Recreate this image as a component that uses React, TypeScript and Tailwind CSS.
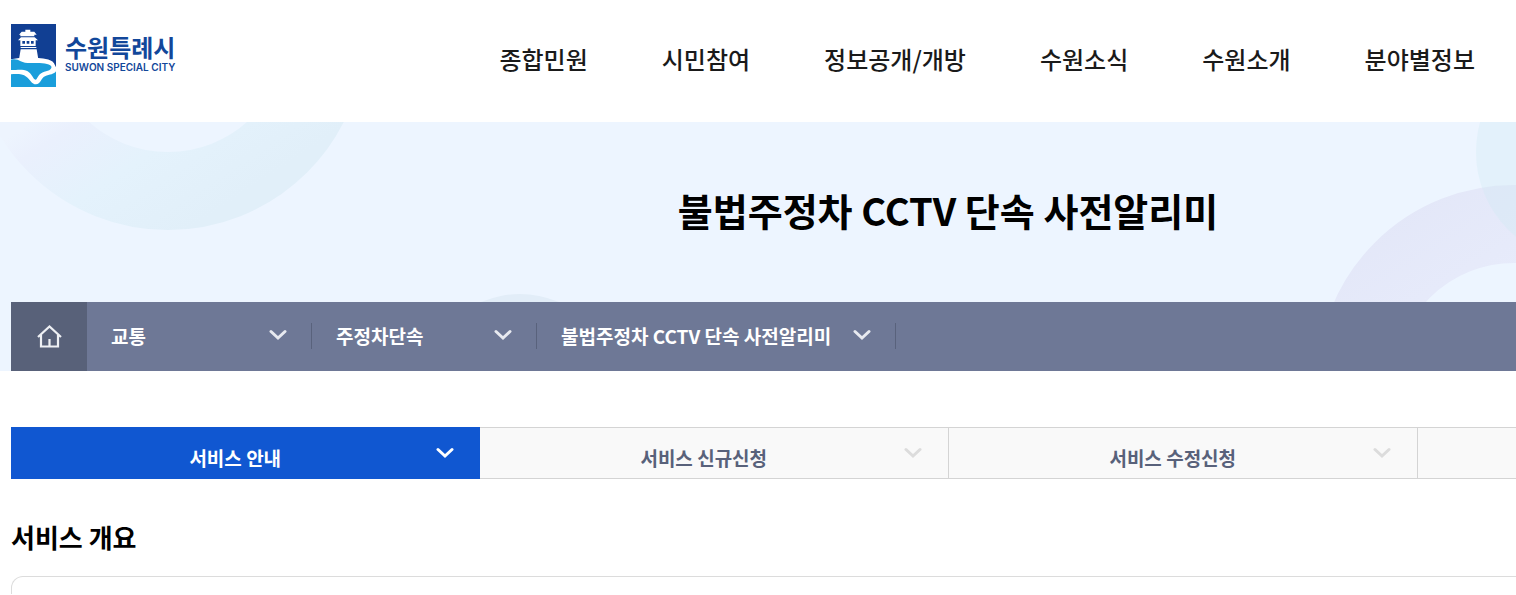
import type { ReactNode } from "react"

const menuItems = ["종합민원", "시민참여", "정보공개/개방", "수원소식", "수원소개", "분야별정보"]
const breadcrumbs = ["교통", "주정차단속", "불법주정차 CCTV 단속 사전알리미"]
const tabs = ["서비스 안내", "서비스 신규신청", "서비스 수정신청"]

function Chevron({ className }: { className: string }) {
  return (
    <svg width="18" height="12" viewBox="0 0 18 12" fill="none" aria-hidden="true" className={className}>
      <path d="M2 2.5 L9 9 L16 2.5" stroke="currentColor" strokeWidth="3" strokeLinecap="round" />
    </svg>
  )
}

function Logo() {
  return (
    <a href="#home" className="flex shrink-0 items-center gap-[9px] text-[#12479a]">
      <svg width="45" height="63" viewBox="0 0 135 189" aria-hidden="true">
        <rect width="135" height="189" fill="#113f93" />
        <path d="M0 106 L24 102 H82 C100 104 127 105 132 124 L135 130 V189 H0 Z" fill="#fff" />
        {/* fortress tower */}
        <path
          d="M43 17 H58 V23 H70 L77 32 H70 V37 H28 V32 H24 L32 23 H43 Z M30 40 H71 L81 49 H74 V66 H28 V49 H21 Z M29 69 H76 V72 H29 Z M29 76 H77 L83 112 H23 Z"
          fill="#fff"
        />
        <path d="M34 51 H42 V59 H34 Z M47 51 H55 V59 H47 Z M60 51 H68 V59 H60 Z" fill="#113f93" />
        {/* river */}
        <path
          d="M0 107 C12 104 21 107 29 112 C43 120 66 116 86 117 C108 118 125 123 121 132 C116 144 96 140 85 152 C78 161 77 167 73 167 C67 167 64 151 50 142 C36 134 13 139 0 138 Z"
          fill="#1a9edb"
        />
        <path
          d="M0 151 C16 150 34 149 46 158 C57 166 62 181 75 181 C89 181 90 162 102 157 C116 151 130 151 135 142 V189 H0 Z"
          fill="#1a9edb"
        />
      </svg>
      <span className="flex flex-col pb-1.5">
        <span className="text-2xl leading-7 font-bold">수원특례시</span>
        <span className="font-[Inter,sans-serif] text-[10px] leading-3 font-semibold">SUWON SPECIAL CITY</span>
      </span>
    </a>
  )
}

function HeroShapes() {
  return (
    <svg width="1896" height="249" viewBox="0 122 1896 249" fill="none" aria-hidden="true" className="absolute top-0 left-0">
      <defs>
        <linearGradient id="ringLeft" gradientUnits="userSpaceOnUse" x1="50" y1="110" x2="146" y2="257">
          <stop offset="0" stopColor="#edf4fe" />
          <stop offset="0.15" stopColor="#eaf0fd" />
          <stop offset="0.52" stopColor="#e4f2fc" />
          <stop offset="1" stopColor="#e1eff9" />
        </linearGradient>
        <linearGradient id="ringRight" gradientUnits="userSpaceOnUse" x1="1400" y1="200" x2="1500" y2="360">
          <stop offset="0" stopColor="#e3e7f8" />
          <stop offset="1" stopColor="#e9edfc" />
        </linearGradient>
      </defs>
      <circle cx="168" cy="33" r="158" stroke="url(#ringLeft)" strokeWidth="78" />
      <circle cx="520" cy="392" r="98" fill="#e2edf8" />
      <circle cx="1514" cy="382" r="158" stroke="url(#ringRight)" strokeWidth="78" />
      <circle cx="1586" cy="152" r="110" fill="#cdebf3" fillOpacity="0.33" />
    </svg>
  )
}

function BreadcrumbItem({ children }: { children: ReactNode }) {
  return (
    <li className="flex items-center pb-0.5">
      <button
        type="button"
        className="flex min-w-56 items-center justify-between gap-[22px] px-6 text-left text-[19px] leading-7 font-bold text-white"
      >
        {children}
        <Chevron className="mb-0.5 shrink-0 text-[#e8eaf0]" />
      </button>
      <span className="h-6.5 w-px bg-[#59627c]" />
    </li>
  )
}

export default function App() {
  return (
    <div className="overflow-hidden bg-white font-['Noto_Sans_CJK_KR','Noto_Sans',sans-serif] text-black">
      <div className="min-w-[1896px]">
        <header className="flex h-[122px] items-start px-[11px] pt-6">
          <Logo />
          <nav className="ml-[324px] pt-[15px]">
            <ul className="flex gap-[74px]">
              {menuItems.map((item) => (
                <li key={item}>
                  <a href="#menu" className="text-2xl leading-10 font-medium whitespace-nowrap text-[#1a1a1a]">
                    {item}
                  </a>
                </li>
              ))}
            </ul>
          </nav>
        </header>

        <section className="relative bg-[#edf5ff] px-[11px]">
          <HeroShapes />
          <div className="relative">
            <h1 className="pt-15 pb-16 text-center text-[38px] leading-14 font-bold">
              불법주정차 CCTV 단속 사전알리미
            </h1>
            <nav aria-label="현재 위치" className="flex h-[69px] bg-[#6e7896]">
              <a href="#home" aria-label="홈" className="flex w-19 items-center justify-center bg-[#586179] text-[#eef0f4]">
                <svg width="26" height="26" viewBox="0 0 26 26" fill="none" stroke="currentColor" strokeWidth="2.2" aria-hidden="true">
                  <path d="M2 13 L13.5 2.500 L25 13 M5 11 V22.500 H22 V11 M13.500 15 V22.500" />
                </svg>
              </a>
              <ul className="flex">
                {breadcrumbs.map((crumb) => (
                  <BreadcrumbItem key={crumb}>{crumb}</BreadcrumbItem>
                ))}
              </ul>
            </nav>
          </div>
        </section>

        <main className="px-[11px] pt-14">
          <ul className="grid h-13 grid-cols-4">
            {tabs.map((tab, i) => (
              <li key={tab} className="flex">
                <a
                  href="#tab"
                  className={`relative flex flex-1 items-center justify-center border-y pt-2.5 pr-5 text-[19px] font-bold ${
                    i === 0 ? "border-[#1057d1] bg-[#1057d1] text-white" : "border-[#d4d4d4] bg-[#f9f9f9] text-[#58617a]"
                  } ${i > 1 ? "border-l" : ""}`}
                >
                  {tab}
                  <Chevron className={`absolute top-[19px] right-[26px] ${i === 0 ? "text-white" : "text-[#dcdcdc]"}`} />
                </a>
              </li>
            ))}
            <li className="border border-[#d4d4d4] bg-[#f9f9f9]" />
          </ul>

          <h2 className="mt-10 text-[26px] leading-9 font-bold">서비스 개요</h2>
          <div className="mt-[21px] h-4.5 rounded-t-xl border border-b-0 border-[#dcdcdc]" />
        </main>
      </div>
    </div>
  )
}
